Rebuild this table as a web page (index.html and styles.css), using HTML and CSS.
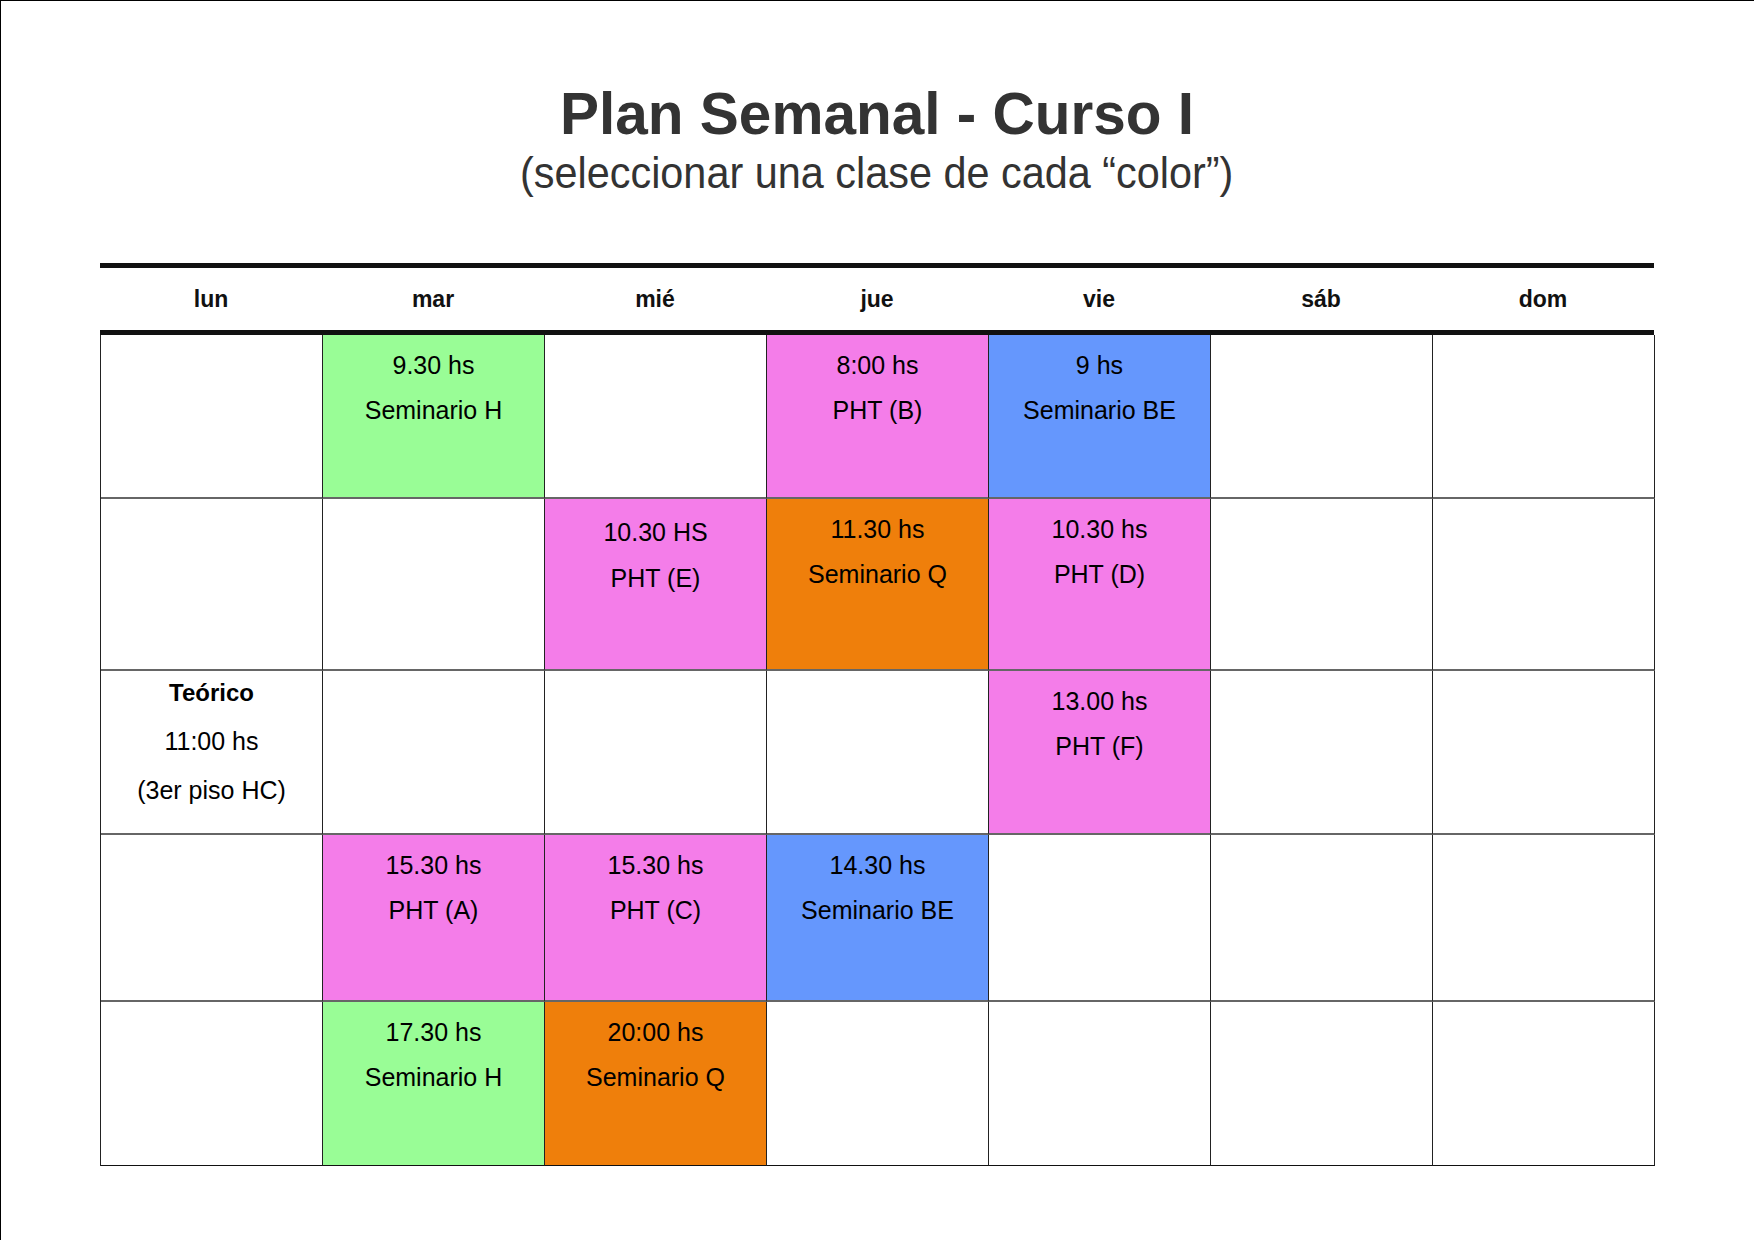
FILE: index.html
```
<!DOCTYPE html>
<html lang="es">
<head>
<meta charset="utf-8">
<title>Plan Semanal - Curso I</title>
<link rel="stylesheet" href="styles.css">
</head>
<body>
<div class="sheet">
  <header class="heading">
    <h1 class="title">Plan Semanal - Curso I</h1>
    <p class="subtitle"><span>(seleccionar una clase de cada “color”)</span></p>
  </header>

  <div class="days">
    <div class="day">lun</div>
    <div class="day">mar</div>
    <div class="day">mié</div>
    <div class="day">jue</div>
    <div class="day">vie</div>
    <div class="day">sáb</div>
    <div class="day">dom</div>
  </div>

  <div class="grid">
    <!-- row 1 -->
    <div class="cell"></div>
    <div class="cell green"><div>9.30 hs</div><div>Seminario H</div></div>
    <div class="cell"></div>
    <div class="cell pink"><div>8:00 hs</div><div>PHT (B)</div></div>
    <div class="cell blue"><div>9 hs</div><div>Seminario BE</div></div>
    <div class="cell"></div>
    <div class="cell"></div>
    <!-- row 2 -->
    <div class="cell"></div>
    <div class="cell"></div>
    <div class="cell pink lower"><div>10.30 HS</div><div>PHT (E)</div></div>
    <div class="cell orange"><div>11.30 hs</div><div>Seminario Q</div></div>
    <div class="cell pink"><div>10.30 hs</div><div>PHT (D)</div></div>
    <div class="cell"></div>
    <div class="cell"></div>
    <!-- row 3 -->
    <div class="cell theory"><div class="strong">Teórico</div><div>11:00 hs</div><div>(3er piso HC)</div></div>
    <div class="cell"></div>
    <div class="cell"></div>
    <div class="cell"></div>
    <div class="cell pink"><div>13.00 hs</div><div>PHT (F)</div></div>
    <div class="cell"></div>
    <div class="cell"></div>
    <!-- row 4 -->
    <div class="cell"></div>
    <div class="cell pink"><div>15.30 hs</div><div>PHT (A)</div></div>
    <div class="cell pink"><div>15.30 hs</div><div>PHT (C)</div></div>
    <div class="cell blue"><div>14.30 hs</div><div>Seminario BE</div></div>
    <div class="cell"></div>
    <div class="cell"></div>
    <div class="cell"></div>
    <!-- row 5 -->
    <div class="cell last"></div>
    <div class="cell last green"><div>17.30 hs</div><div>Seminario H</div></div>
    <div class="cell last orange"><div>20:00 hs</div><div>Seminario Q</div></div>
    <div class="cell last"></div>
    <div class="cell last"></div>
    <div class="cell last"></div>
    <div class="cell last"></div>
  </div>
</div>
</body>
</html>
```
FILE: styles.css
```
html, body {
  margin: 0;
  padding: 0;
}

body {
  background: #ffffff;
  border-top: 1px solid #000000;
  border-left: 1px solid #000000;
  min-height: 100vh;
  box-sizing: border-box;
  font-family: "Liberation Sans", Arial, sans-serif;
  color: #000000;
}

.sheet {
  width: 1554px;
  margin-left: 99px;
}

.heading {
  padding-top: 84px;
  text-align: center;
}

.title {
  margin: 0;
  font-size: 58.5px;
  line-height: 57px;
  font-weight: bold;
  color: #333333;
}

.subtitle {
  margin: 8px 0 0 0;
  font-size: 45px;
  line-height: 45px;
  color: #333333;
}

.subtitle span {
  display: inline-block;
  transform: scaleX(0.92);
  white-space: nowrap;
}

.days {
  margin-top: 68px;
  display: grid;
  grid-template-columns: repeat(7, 222px);
  height: 72px;
  box-sizing: border-box;
  border-top: 5px solid #111111;
  border-bottom: 5px solid #111111;
}

.day {
  text-align: center;
  font-size: 23px;
  font-weight: bold;
  line-height: 62px;
  color: #111111;
}

.grid {
  display: grid;
  grid-template-columns: repeat(7, 222px);
  grid-template-rows: 164px 172px 164px 167px 164px;
  border-left: 1px solid #222222;
}

.cell {
  box-sizing: border-box;
  border-right: 1px solid #222222;
  border-bottom: 2px solid #666666;
  padding-top: 8px;
  text-align: center;
  font-size: 25px;
  line-height: 45px;
  color: #000000;
}

.cell.last {
  border-bottom: 1px solid #111111;
}

.cell.lower {
  padding-top: 10px;
  line-height: 46px;
}

.cell.theory {
  padding-top: 0;
  line-height: 49px;
}

.strong {
  font-weight: bold;
  font-size: 24px;
  margin-top: -3px;
}

.green {
  background: #99fd96;
}

.pink {
  background: #f47de9;
}

.blue {
  background: #6597fd;
}

.orange {
  background: #ef7f0b;
}
```
